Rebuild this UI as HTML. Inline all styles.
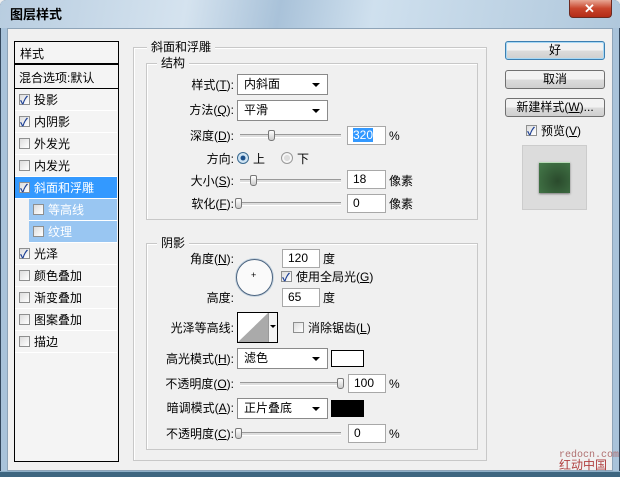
<!DOCTYPE html><html><head><meta charset="utf-8"><style>
*{box-sizing:border-box}
body{margin:0;width:620px;height:477px;overflow:hidden;font-family:"Liberation Sans","Noto Sans CJK SC",sans-serif;font-size:12px;color:#000;position:relative;background:#f0f0f0}
.a{position:absolute}
.t{position:absolute;white-space:nowrap;line-height:14px}
.r{text-align:right}
.grp{position:absolute;border:1px solid #c8c8c8;box-shadow:1px 1px 0 #fff inset}
.leg{position:absolute;background:#f0f0f0;padding:0 4px;line-height:14px}
.dd{position:absolute;background:#fff;border:1px solid #8a8a8a;height:21px;line-height:19px;padding-left:6px}
.dd:after{content:"";position:absolute;right:7px;top:8px;border:4px solid transparent;border-top:4px solid #000;border-bottom:0}
.inp{position:absolute;background:#fff;border:1px solid #a8a8a8;height:19px;line-height:17px;padding-left:5px}
.sl{position:absolute;height:4px;border-top:1px solid #999;border-bottom:1px solid #fff;background:#ddd}
.th{position:absolute;width:7px;height:11px;border:1px solid #777;border-radius:2px 2px 3px 3px;background:linear-gradient(#fff,#ccc)}
.cb{position:absolute;width:11px;height:11px;border:1px solid #8e8f8f;background:linear-gradient(135deg,#ddd,#fff)}
.ck:after{content:"✓";position:absolute;left:0;top:-3px;font-size:11px;color:#1c3f94;font-weight:bold}
.it{position:absolute;left:15px;width:102px;height:22px;border-bottom:1px solid #fff;background:#f4f4f4}
.it .cb{left:4px;top:5px}
.it span{position:absolute;left:19px;top:4px;line-height:14px}
.btn{position:absolute;left:505px;width:100px;height:19px;border:1px solid #707070;border-radius:3px;background:linear-gradient(#f2f2f2 50%,#dcdcdc 50%,#cfcfcf);text-align:center;line-height:17px}
u{text-decoration:underline}
</style></head><body>
<div class="a" style="left:0;top:0;width:620px;height:477px;border:1px solid #33475c;border-radius:6px 6px 0 0;background:#a9c3da"></div>
<div class="a" style="left:0;top:0;width:620px;height:28px;border-radius:6px 6px 0 0;background:linear-gradient(100deg,#b8cde0 0%,#d5e3ef 30%,#a9c2d9 45%,#cfe0ee 60%,#b0c8dc 100%)"></div>
<div class="t" style="left:10px;top:8px;font-weight:bold;font-size:13px">图层样式</div>
<div class="a" style="left:569px;top:0;width:43px;height:18px;border:1px solid #6b2a20;border-top:0;border-radius:0 0 4px 4px;background:linear-gradient(#e8a795,#c8452c 50%,#b32c17)"></div>
<div class="t" style="left:584px;top:2px;color:#fff;font-weight:bold;font-size:13px">✕</div>
<div class="a" style="left:7px;top:28px;width:606px;height:443px;background:#f0f0f0;border:1px solid #8ea4b8"></div>
<div class="a" style="left:0;top:471px;width:620px;height:6px;background:#3e6680;border-top:1px solid #8fb0c8"></div>

<div class="a" style="left:14px;top:41px;width:105px;height:421px;border:1px solid #000;background:#f4f4f4"></div>
<div class="a" style="left:15px;top:42px;width:103px;height:23px;border-bottom:2px solid #000"></div>
<div class="t" style="left:20px;top:47px">样式</div>
<div class="a" style="left:15px;top:67px;width:103px;height:22px;border-bottom:1px solid #000"></div>
<div class="t" style="left:19px;top:71px">混合选项:默认</div>
<div class="it" style="top:89px"><div class="cb ck"></div><span>投影</span></div>
<div class="it" style="top:111px"><div class="cb ck"></div><span>内阴影</span></div>
<div class="it" style="top:133px"><div class="cb"></div><span>外发光</span></div>
<div class="it" style="top:155px"><div class="cb"></div><span>内发光</span></div>
<div class="it" style="top:177px;background:#3399ff;color:#fff"><div class="cb ck"></div><span>斜面和浮雕</span></div>
<div class="it" style="top:199px;left:29px;width:88px;background:#99c6f2;color:#fff"><div class="cb"></div><span>等高线</span></div>
<div class="it" style="top:221px;left:29px;width:88px;background:#99c6f2;color:#fff"><div class="cb"></div><span>纹理</span></div>
<div class="it" style="top:243px"><div class="cb ck"></div><span>光泽</span></div>
<div class="it" style="top:265px"><div class="cb"></div><span>颜色叠加</span></div>
<div class="it" style="top:287px"><div class="cb"></div><span>渐变叠加</span></div>
<div class="it" style="top:309px"><div class="cb"></div><span>图案叠加</span></div>
<div class="it" style="top:331px"><div class="cb"></div><span>描边</span></div>

<div class="grp" style="left:133px;top:47px;width:354px;height:414px"></div>
<div class="leg" style="left:147px;top:40px">斜面和浮雕</div>
<div class="grp" style="left:146px;top:63px;width:332px;height:157px"></div>
<div class="leg" style="left:157px;top:56px">结构</div>
<div class="t r" style="left:150px;width:84px;top:78px">样式(<u>T</u>):</div>
<div class="dd" style="left:237px;top:74px;width:91px">内斜面</div>
<div class="t r" style="left:150px;width:84px;top:103px">方法(<u>Q</u>):</div>
<div class="dd" style="left:237px;top:100px;width:91px">平滑</div>
<div class="t r" style="left:150px;width:84px;top:129px">深度(<u>D</u>):</div>
<div class="sl" style="left:240px;top:134px;width:101px"></div><div class="th" style="left:268px;top:130px"></div>
<div class="inp" style="left:347px;top:126px;width:39px"><span style="background:#3399ff;color:#fff">320</span></div>
<div class="t" style="left:389px;top:129px">%</div>
<div class="t r" style="left:150px;width:84px;top:152px">方向:</div>
<div class="a" style="left:237px;top:152px;width:12px;height:12px;border-radius:50%;border:1px solid #3a6a90;background:radial-gradient(#1a4f8a 30%,#cfe4f4 40%)"></div>
<div class="t" style="left:253px;top:152px">上</div>
<div class="a" style="left:281px;top:152px;width:12px;height:12px;border-radius:50%;border:1px solid #999;background:radial-gradient(#ddd 40%,#f6f6f6 45%)"></div>
<div class="t" style="left:297px;top:152px">下</div>
<div class="t r" style="left:150px;width:84px;top:174px">大小(<u>S</u>):</div>
<div class="sl" style="left:240px;top:179px;width:101px"></div><div class="th" style="left:250px;top:175px"></div>
<div class="inp" style="left:347px;top:170px;width:39px">18</div>
<div class="t" style="left:389px;top:174px">像素</div>
<div class="t r" style="left:150px;width:84px;top:197px">软化(<u>F</u>):</div>
<div class="sl" style="left:237px;top:202px;width:104px"></div><div class="th" style="left:235px;top:198px"></div>
<div class="inp" style="left:347px;top:194px;width:39px">0</div>
<div class="t" style="left:389px;top:197px">像素</div>

<div class="grp" style="left:146px;top:243px;width:332px;height:207px"></div>
<div class="leg" style="left:157px;top:236px">阴影</div>
<div class="t r" style="left:150px;width:84px;top:252px">角度(<u>N</u>):</div>
<div class="a" style="left:236px;top:259px;width:37px;height:37px;border-radius:50%;border:1px solid #4d6580;background:#fafafa;box-shadow:0 0 0 1px #c6d4e0"></div>
<div class="t" style="left:251px;top:268px;font-size:9px">+</div>
<div class="inp" style="left:282px;top:249px;width:38px">120</div>
<div class="t" style="left:323px;top:252px">度</div>
<div class="cb ck" style="left:281px;top:271px"></div>
<div class="t" style="left:296px;top:270px">使用全局光(<u>G</u>)</div>
<div class="t r" style="left:150px;width:84px;top:291px">高度:</div>
<div class="inp" style="left:282px;top:288px;width:38px">65</div>
<div class="t" style="left:323px;top:291px">度</div>
<div class="t r" style="left:150px;width:84px;top:321px">光泽等高线:</div>
<div class="a" style="left:237px;top:312px;width:41px;height:31px;border:1px solid #000;background:#fff"></div>
<svg class="a" style="left:238px;top:313px" width="30" height="29"><polygon points="0,29 30,0 30,29" fill="#aaa"/></svg>
<div class="a" style="left:268px;top:313px;width:9px;height:29px;border-left:1px solid #999;background:#f4f4f4"></div>
<div class="a" style="left:270px;top:325px;border:3px solid transparent;border-top:3px solid #000"></div>
<div class="cb" style="left:293px;top:322px"></div>
<div class="t" style="left:308px;top:321px">消除锯齿(<u>L</u>)</div>
<div class="t r" style="left:150px;width:84px;top:352px">高光模式(<u>H</u>):</div>
<div class="dd" style="left:237px;top:348px;width:91px">滤色</div>
<div class="a" style="left:331px;top:350px;width:33px;height:17px;border:1px solid #000;background:#fff"></div>
<div class="t r" style="left:150px;width:84px;top:377px">不透明度(<u>O</u>):</div>
<div class="sl" style="left:240px;top:382px;width:103px"></div><div class="th" style="left:337px;top:378px"></div>
<div class="inp" style="left:348px;top:374px;width:38px">100</div>
<div class="t" style="left:389px;top:377px">%</div>
<div class="t r" style="left:150px;width:84px;top:401px">暗调模式(<u>A</u>):</div>
<div class="dd" style="left:237px;top:398px;width:91px">正片叠底</div>
<div class="a" style="left:331px;top:400px;width:33px;height:17px;background:#000"></div>
<div class="t r" style="left:150px;width:84px;top:427px">不透明度(<u>C</u>):</div>
<div class="sl" style="left:237px;top:432px;width:104px"></div><div class="th" style="left:235px;top:428px"></div>
<div class="inp" style="left:348px;top:424px;width:38px">0</div>
<div class="t" style="left:389px;top:427px">%</div>

<div class="btn" style="top:41px;border-color:#3c7fb1;box-shadow:0 0 0 1px #a7d8f5 inset">好</div>
<div class="btn" style="top:70px">取消</div>
<div class="btn" style="top:98px">新建样式(<u>W</u>)...</div>
<div class="cb ck" style="left:526px;top:125px"></div>
<div class="t" style="left:541px;top:124px">预览(<u>V</u>)</div>
<div class="a" style="left:522px;top:145px;width:65px;height:65px;background:#dcdcdc;border:1px solid #ccc"></div>
<div class="a" style="left:539px;top:162px;width:31px;height:31px;background:radial-gradient(circle at 60% 60%,#2a4a2c,#457a4a);border-top:1px solid #b9dcb8;box-shadow:0 1px 2px #777"></div>

<div class="t" style="left:559px;top:449px;font-family:'Liberation Mono',monospace;font-size:10px;color:#b07070">redocn.com</div>
<div class="t" style="left:559px;top:458px;font-size:12px;color:#b04040">红动中国</div>
</body></html>
